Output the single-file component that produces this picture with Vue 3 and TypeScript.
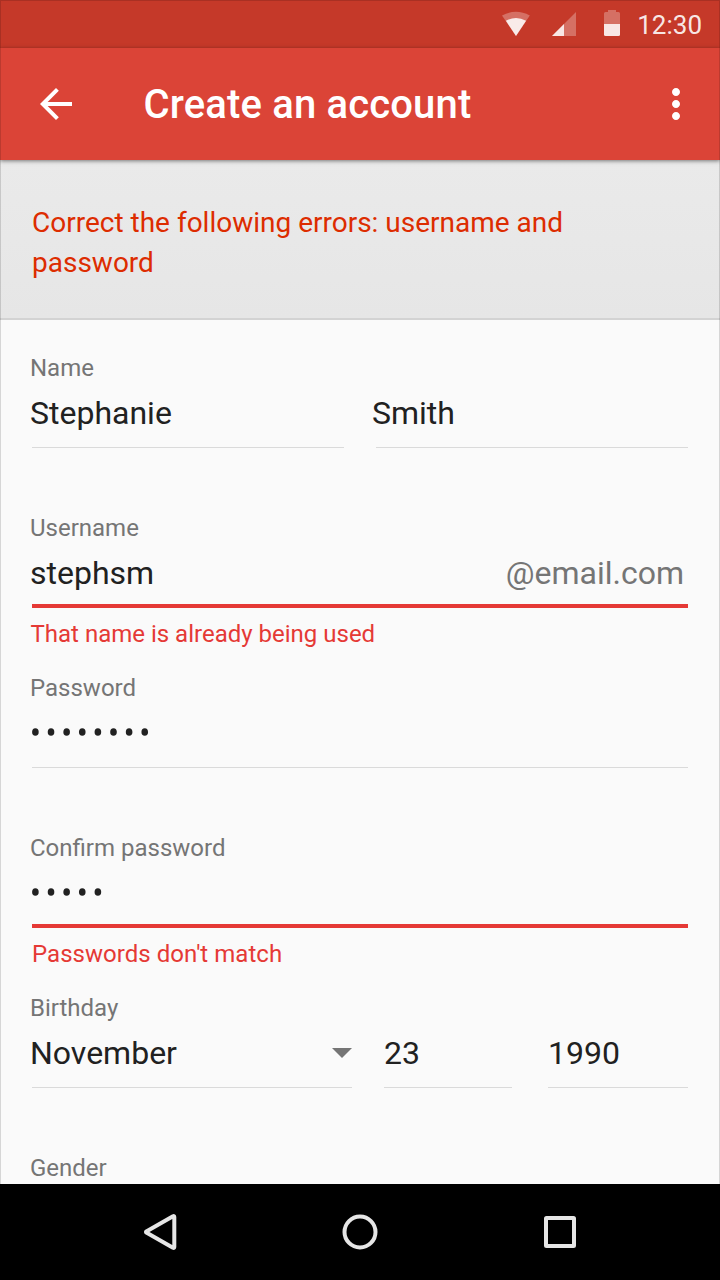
<script setup lang="ts">
import { ref } from 'vue'

const firstName = ref('Stephanie')
const lastName = ref('Smith')
const username = ref('stephsm')
const passwordLength = ref(8)
const confirmLength = ref(5)
const birthday = ref({ month: 'November', day: '23', year: '1990' })

const dotX = (n: number): number => 3.4 + (n - 1) * 15.62
</script>

<template>
  <div class="screen">
    <div class="app">
      <div class="status-bar">
        <svg class="status-icons" width="124" height="48" viewBox="0 0 124 48">
          <path d="M6 15.5Q20 8 33.8 15.5L20 36Z" fill="#fff" fill-opacity=".28" />
          <path d="M9.900 20.800Q20 15.400 30.100 20.800L20 36Z" fill="#fff" fill-opacity=".86" />
          <path d="M80 12V36H56Z" fill="#fff" fill-opacity=".28" />
          <path d="M68 24V36H56Z" fill="#fff" fill-opacity=".83" />
          <path d="M112 10h8v2h2.500q1.500 0 1.500 1.500V24h-16V13.500q0-1.500 1.500-1.500H112Z" fill="#fff" fill-opacity=".28" />
          <path d="M108 24h16v10.500q0 1.500-1.500 1.500h-13q-1.500 0-1.500-1.500Z" fill="#fff" fill-opacity=".88" />
        </svg>
        <span class="time">12:30</span>
      </div>

      <header class="toolbar">
        <svg class="back" width="48" height="48" viewBox="0 0 24 24">
          <path d="M20 11H7.830l5.590-5.590L12 4l-8 8 8 8 1.410-1.410L7.830 13H20v-2z" fill="#fff" />
        </svg>
        <h1>Create an account</h1>
        <svg class="more" width="48" height="48" viewBox="0 0 24 24">
          <path d="M12 8c1.100 0 2-.9 2-2s-.9-2-2-2-2 .9-2 2 .9 2 2 2zm0 2c-1.100 0-2 .9-2 2s.9 2 2 2 2-.9 2-2-.9-2-2-2zm0 6c-1.100 0-2 .9-2 2s.9 2 2 2 2-.9 2-2-.9-2-2-2z" fill="#fff" />
        </svg>
      </header>

      <div class="alert">
        <p>Correct the following errors: username and<br />password</p>
      </div>

      <main class="form">
        <section class="group">
          <label>Name</label>
          <div class="row names">
            <div class="field"><span>{{ firstName }}</span></div>
            <div class="field last"><span>{{ lastName }}</span></div>
          </div>
        </section>

        <section class="group">
          <label>Username</label>
          <div class="row">
            <div class="field invalid">
              <span>{{ username }}</span>
              <span class="suffix">@email.com</span>
            </div>
          </div>
          <p class="error taken">That name is already being used</p>
        </section>

        <section class="group">
          <label>Password</label>
          <div class="row">
            <div class="field">
              <svg class="secret" width="160" height="56">
                <ellipse v-for="n in passwordLength" :key="n" :cx="dotX(n)" cy="28" rx="3.3" ry="3.8" />
              </svg>
            </div>
          </div>
        </section>

        <section class="group">
          <label>Confirm password</label>
          <div class="row">
            <div class="field invalid">
              <svg class="secret" width="160" height="56">
                <ellipse v-for="n in confirmLength" :key="n" :cx="dotX(n)" cy="28" rx="3.3" ry="3.8" />
              </svg>
            </div>
          </div>
          <p class="error mismatch">Passwords don't match</p>
        </section>

        <section class="group">
          <label>Birthday</label>
          <div class="row birthday">
            <div class="field">
              <span>{{ birthday.month }}</span>
              <svg class="caret" width="20" height="10" viewBox="0 0 20 10">
                <path d="M0 0H20L10 10Z" fill="#757575" />
              </svg>
            </div>
            <div class="field day"><span>{{ birthday.day }}</span></div>
            <div class="field year"><span>{{ birthday.year }}</span></div>
          </div>
        </section>

        <section class="group">
          <label>Gender</label>
        </section>
      </main>
    </div>

    <nav class="nav-bar">
      <svg width="48" height="48" viewBox="0 0 48 48">
        <path d="M10.300 23.500L37 8.200Q38.300 7.600 38.300 9V39Q38.300 40.400 37 39.800L10.300 24.500Q9.600 24 10.300 23.500Z" />
      </svg>
      <svg width="48" height="48" viewBox="0 0 48 48"><circle cx="24" cy="24" r="15.500" /></svg>
      <svg width="48" height="48" viewBox="0 0 48 48"><rect x="10" y="10" width="28" height="28" rx=".5" /></svg>
    </nav>
  </div>
</template>

<style>
body {
  margin: 0;
}
</style>

<style scoped>
.screen {
  width: 720px;
  height: 1280px;
  overflow: hidden;
  display: flex;
  flex-direction: column;
  background: #fafafa;
  font-family: Roboto, sans-serif;
}

.app {
  position: relative;
  height: 1184px;
  overflow: hidden;
  display: flex;
  flex-direction: column;
}

/* hairline frame round the window */
.app::after {
  content: '';
  position: absolute;
  inset: 0;
  border: 1px solid rgba(0, 0, 0, 0.14);
  border-bottom: 0;
  pointer-events: none;
}

.status-bar {
  flex: none;
  height: 48px;
  box-sizing: border-box;
  padding-right: 18px;
  display: flex;
  justify-content: flex-end;
  align-items: center;
  gap: 17px;
  background: #c53929;
}

.status-icons {
  flex: none;
}

.time {
  font-size: 26px;
  line-height: 46px;
  padding-top: 2px;
  color: rgba(255, 255, 255, 0.9);
}

.toolbar {
  position: relative;
  flex: none;
  height: 112px;
  box-sizing: border-box;
  padding: 0 20px 0 32px;
  display: flex;
  align-items: center;
  background: #db4437;
  box-shadow: 0 1px 4px rgba(0, 0, 0, 0.5);
}

.toolbar h1 {
  flex: 1;
  margin: 0 0 0 63.500px;
  padding-top: 2px;
  font-size: 40px;
  line-height: 48px;
  font-weight: 500;
  letter-spacing: 0.16px;
  color: #fff;
}

.alert {
  flex: none;
  height: 160px;
  box-sizing: border-box;
  padding: 43px 31px 0 32px;
  background: linear-gradient(#eaeaea, #e6e6e6);
  border-bottom: 2px solid #d3d3d3;
}

.alert p {
  margin: 0;
  font-size: 28px;
  line-height: 40px;
  color: #dd2c00;
}

.form {
  flex: none;
  padding: 0 32px;
}

.group {
  height: 160px;
  box-sizing: border-box;
  padding-top: 32px;
  display: flex;
  flex-direction: column;
}

.group label {
  height: 32px;
  margin-left: -2px;
  font-size: 24px;
  line-height: 32px;
  color: #757575;
}

.row {
  display: flex;
  height: 64px;
  align-items: flex-start;
}

.field {
  flex: 1;
  height: 64px;
  box-sizing: border-box;
  display: flex;
  align-items: flex-start;
  justify-content: space-between;
  border-bottom: 1px solid #dadada;
  font-size: 32px;
  line-height: 58px;
  color: #212121;
}

.field span {
  margin-left: -2px;
}

.names {
  gap: 32px;
}

.field.last span {
  margin-left: -4px;
}

.field.invalid {
  border-bottom: 4px solid #e53935;
}

.field .suffix {
  margin-right: 4px;
  color: #757575;
}

.secret {
  fill: #212121;
}

.error {
  margin: 0;
  font-size: 24px;
  line-height: 52px;
  color: #e53935;
}

.error.taken {
  margin-left: -1.500px;
}

.error.mismatch {
  letter-spacing: 0.04px;
}

.birthday .field {
  flex: 0 0 320px;
}

.birthday .field.day {
  flex-basis: 128px;
  margin-left: 32px;
}

.birthday .field.year {
  flex-basis: 140px;
  margin-left: 36px;
}

.field.day span,
.field.year span {
  margin-left: 0;
}

.caret {
  margin-top: 24px;
}

.nav-bar {
  flex: none;
  height: 96px;
  display: flex;
  justify-content: center;
  align-items: center;
  gap: 152px;
  background: #000;
}

.nav-bar svg {
  fill: none;
  stroke: #e6e6e6;
  stroke-width: 4;
  stroke-linejoin: round;
}
</style>
